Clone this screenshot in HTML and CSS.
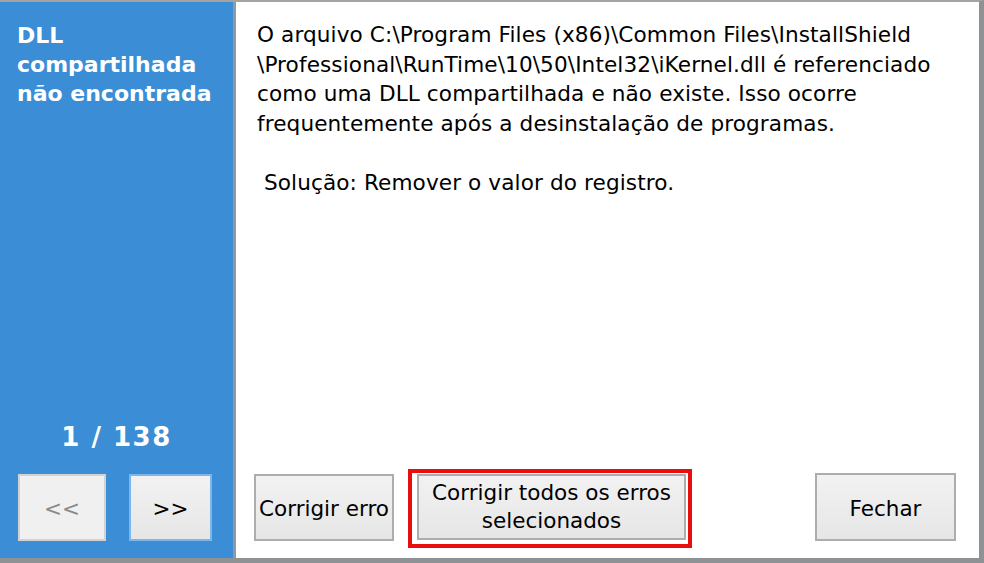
FILE: index.html
```html
<!DOCTYPE html>
<html lang="pt-BR">

<head>
    <meta charset="UTF-8">
    <meta name="viewport" content="width=device-width, initial-scale=1.0">
    <title>DLL compartilhada não encontrada</title>
    <link rel="stylesheet" href="styles.css">
</head>

<body>

    <div class="dialog">
        <!-- Painel lateral azul -->
        <div class="sidebar">
            <h1 class="title">DLL<br>compartilhada<br>não encontrada</h1>
            <div class="counter">1 / 138</div>
            <div class="nav">
                <button type="button" class="btn nav-btn prev" disabled>&lt;&lt;</button>
                <button type="button" class="btn nav-btn next">&gt;&gt;</button>
            </div>
        </div>

        <!-- Conteúdo -->
        <div class="main">
            <p class="message">O arquivo C:\Program Files (x86)\Common Files\InstallShield<br>\Professional\RunTime\10\50\Intel32\iKernel.dll é referenciado<br>como uma DLL compartilhada e não existe. Isso ocorre<br>frequentemente após a desinstalação de programas.<br><br>&nbsp;Solução: Remover o valor do registro.</p>

            <div class="actions">
                <button type="button" class="btn fix-one">Corrigir erro</button>
                <div class="highlight">
                    <button type="button" class="btn fix-all">Corrigir todos os erros<br>selecionados</button>
                </div>
                <button type="button" class="btn close">Fechar</button>
            </div>
        </div>
    </div>

</body>

</html>
```

FILE: styles.css
```css
/* Reset básico */
* {
    margin: 0;
    padding: 0;
    box-sizing: border-box;
    font-family: "DejaVu Sans", Verdana, sans-serif;
}

body {
    width: 984px;
    height: 563px;
    background: #fff;
    overflow: hidden;
}

/* Janela */
.dialog {
    display: flex;
    height: 563px;
    border-top: 2px solid #a3a3a3;
    border-right: 5px solid #8f9294;
    border-bottom: 5px solid #8f9294;
}

/* Painel lateral */
.sidebar {
    width: 236px;
    display: flex;
    flex-direction: column;
    padding: 19px 21px 17px 17px;
    background: #3b8dd5;
    border-right: 3px solid #8c9aa8;
}

.title {
    font-size: 22px;
    font-weight: bold;
    line-height: 29px;
    color: #fff;
    white-space: nowrap;
}

.counter {
    margin-top: auto;
    text-align: center;
    font-size: 26px;
    font-weight: bold;
    color: #fff;
    padding-left: 4px;
    margin-bottom: 22px;
    letter-spacing: 1.5px;
}

.nav {
    display: flex;
    gap: 23px;
    padding-left: 1px;
}

/* Botões estilo Windows */
.btn {
    font-size: 21.5px;
    color: #000;
    background: linear-gradient(#f2f2f2, #e6e6e6);
    border: 2px solid #adadad;
    line-height: 28px;
    cursor: pointer;
}

.nav-btn {
    height: 67px;
    padding-top: 3px;
}

.prev {
    width: 88px;
    color: #8a8a8a;
    border-color: #d2d2d2;
    background: #f0f0f0;
}

.next {
    width: 83px;
    border-color: #7fb6ea;
}

/* Área principal */
.main {
    flex: 1;
    display: flex;
    flex-direction: column;
    padding: 18px 23px 10px 21px;
}

.message {
    font-size: 21.6px;
    line-height: 29.5px;
    color: #000;
    letter-spacing: 0.1px;
}

.actions {
    margin-top: auto;
    display: flex;
    align-items: flex-start;
    margin-left: -3px;
}

.fix-one {
    width: 140px;
    height: 67px;
    padding-top: 3px;
    margin-top: 5px;
    margin-right: 14px;
}

.highlight {
    border: 4px solid #e80e0e;
    padding: 1px 2px 4px 5px;
}

.fix-all {
    width: 269px;
    height: 66px;
}

.close {
    width: 141px;
    height: 68px;
    padding-top: 3px;
    margin-top: 4px;
    margin-left: auto;
}
```
